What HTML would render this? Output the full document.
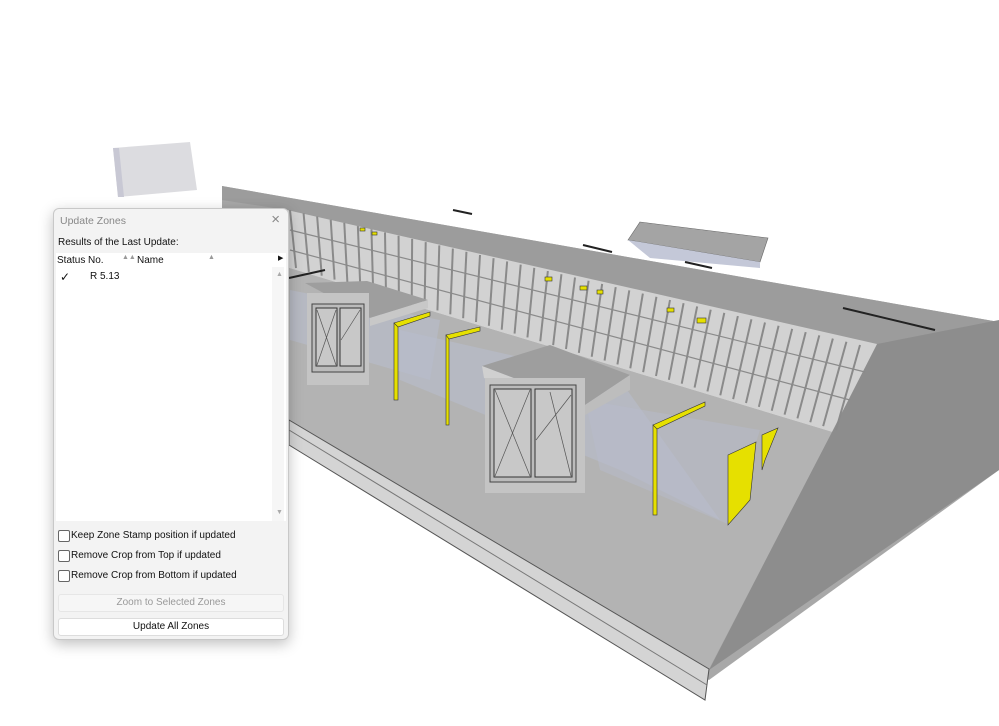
<!DOCTYPE html>
<html><head><meta charset="utf-8"><style>
body{margin:0;width:999px;height:726px;background:#fff;overflow:hidden;position:relative;font-family:"Liberation Sans",sans-serif}
#dlg{position:absolute;left:53px;top:208px;width:234px;height:430px;background:#f3f3f3;border:1px solid #c8c8c8;border-radius:6px;box-shadow:0 4px 14px rgba(0,0,0,.25);font-size:10px;color:#111}
.t{position:absolute}
.cb{position:absolute;left:4px;width:10px;height:10px;border:1px solid #666;border-radius:2px;background:#fff}
.btn{position:absolute;left:4px;width:224px;height:16px;border:1px solid #ddd;border-radius:3px;text-align:center;line-height:16px}
</style></head><body>
<svg id="sv" width="999" height="726" style="position:absolute;left:0;top:0">
<polygon points="113,148 190,142 197,190 118,197" fill="#dcdce0"/>
<polygon points="113,148 118,197 124,197 119,148" fill="#c8c8d4"/>
<polygon points="222,186 999,322 999,470 709,680 289,440 222,215" fill="#a8a8a8"/>
<polygon points="222,186 999,322 877,345 287,210 222,200" fill="#9c9c9c"/>
<polygon points="640,222 768,238 760,262 628,240" fill="#a4a4a4" stroke="#666" stroke-width=".6"/>
<polygon points="628,240 760,262 760,268 650,258" fill="#c4c8d8"/>
<polygon points="877,344 999,320 999,470 709,670" fill="#8d8d8d"/>
<polygon points="287,210 877,344 832,432 289,268" fill="#d2d2d2"/>
<g id="raf" stroke="#8a8a8a" stroke-width="2"></g>
<polygon points="289,268 832,432 709,669 289,420" fill="#b3b3b3"/>
<polygon points="289,420 709,669 705,700 289,445" fill="#d4d4d4" stroke="#555" stroke-width="1"/>
<line x1="289" y1="430" x2="707" y2="685" stroke="#777"/>
<polygon points="290,290 440,320 430,380 290,340" fill="#b8bccc" opacity=".6"/>
<polygon points="400,330 620,380 720,520 620,470 400,380" fill="#b8bccc" opacity=".6"/>
<polygon points="585,400 760,430 730,525 600,470" fill="#b8bccc" opacity=".5"/>
<!-- dormer1 -->
<polygon points="305,283 367,281 428,300 370,318" fill="#9e9e9e"/>
<polygon points="370,318 428,300 428,308 370,326" fill="#c8c8c8"/>
<rect x="307" y="293" width="62" height="92" fill="#c4c4c4"/>
<rect x="312" y="304" width="52" height="68" fill="#bbb" stroke="#444"/>
<rect x="316" y="308" width="21" height="58" fill="#c8c8c8" stroke="#333"/>
<rect x="340" y="308" width="21" height="58" fill="#c8c8c8" stroke="#333"/>
<!-- dormer2 -->
<polygon points="482,366 550,345 630,375 585,405" fill="#9e9e9e"/>
<polygon points="585,405 630,375 630,390 585,415" fill="#bdbdbd"/>
<polygon points="482,366 585,405 585,415 484,378" fill="#d0d0d0"/>
<rect x="485" y="378" width="100" height="115" fill="#c4c4c4"/>
<rect x="490" y="385" width="86" height="97" fill="#bbb" stroke="#444"/>
<rect x="494" y="389" width="37" height="88" fill="#c8c8c8" stroke="#333"/>
<rect x="535" y="389" width="37" height="88" fill="#c8c8c8" stroke="#333"/>
<g stroke="#555" stroke-width=".7"><line x1="317" y1="310" x2="336" y2="365"/><line x1="336" y1="310" x2="317" y2="365"/><line x1="341" y1="340" x2="360" y2="310"/><line x1="495" y1="390" x2="530" y2="476"/><line x1="530" y1="390" x2="495" y2="476"/><line x1="536" y1="440" x2="571" y2="395"/><line x1="550" y1="392" x2="571" y2="476"/></g>
<!-- yellow -->
<g fill="#e6e000" stroke="#333" stroke-width=".6">
<rect x="394" y="323" width="4" height="77"/><polygon points="394,323 430,312 430,316 398,327"/>
<rect x="446" y="335" width="3" height="90"/><polygon points="446,335 480,327 480,331 449,339"/>
<rect x="653" y="425" width="4" height="90"/><polygon points="653,425 705,402 705,406 657,429"/>
<polygon points="728,455 756,442 750,500 728,525"/><polygon points="762,435 778,428 765,460 762,470"/>
<rect x="545" y="277" width="7" height="4"/><rect x="580" y="286" width="7" height="4"/><rect x="597" y="290" width="6" height="4"/><rect x="667" y="308" width="7" height="4"/><rect x="697" y="318" width="9" height="5"/><rect x="360" y="228" width="5" height="3"/><rect x="372" y="232" width="5" height="3"/>
</g>
<g stroke="#222" stroke-width="2"><line x1="453" y1="210" x2="472" y2="214"/><line x1="583" y1="245" x2="612" y2="252"/><line x1="685" y1="262" x2="712" y2="268"/><line x1="843" y1="308" x2="935" y2="330"/><line x1="289" y1="278" x2="325" y2="270"/></g>
</svg>
<div id="dlg">
<div class="t" style="left:6px;top:6px;color:#888;font-size:10.5px">Update Zones</div>
<div class="t" style="right:8px;top:2px;color:#888;font-size:15px">×</div>
<div class="t" style="left:4px;top:28px">Results of the Last Update:</div>
<div style="position:absolute;left:2px;top:44px;width:230px;height:268px;background:#fff">
<div class="t" style="left:1px;top:2px">Status</div>
<div class="t" style="left:32px;top:2px">No.</div>
<div class="t" style="left:66px;top:1px;color:#999;font-size:7px">▲▲</div>
<div class="t" style="left:81px;top:2px">Name</div>
<div class="t" style="left:152px;top:1px;color:#999;font-size:7px">▲</div>
<div class="t" style="left:222px;top:1px;font-size:7px">▶</div>
<div class="t" style="left:216px;top:14px;width:12px;height:254px;background:#f6f6f6"></div>
<div class="t" style="left:220px;top:18px;color:#aaa;font-size:7px">▲</div>
<div class="t" style="left:220px;top:256px;color:#aaa;font-size:7px">▼</div>
<div class="t" style="left:4px;top:17px;font-size:12px">✓</div>
<div class="t" style="left:34px;top:18px">R 5.13</div>
</div>
<div class="cb" style="top:321px"></div><div class="t" style="left:17px;top:321px">Keep Zone Stamp position if updated</div>
<div class="cb" style="top:341px"></div><div class="t" style="left:17px;top:341px">Remove Crop from Top if updated</div>
<div class="cb" style="top:361px"></div><div class="t" style="left:17px;top:361px">Remove Crop from Bottom if updated</div>
<div class="btn" style="top:385px;color:#999;background:#f6f6f6;border-color:#e6e6e6">Zoom to Selected Zones</div>
<div class="btn" style="top:409px;background:#fff">Update All Zones</div>
</div>
<script>
var g=document.getElementById('raf'),s='';
for(var i=0;i<=42;i++){var t=i/42;var x1=290+570*t,y1=210+135*t,x2=296+540*t,y2=268+162*t;s+='<line x1="'+x1+'" y1="'+y1+'" x2="'+x2+'" y2="'+y2+'"/>';}
s+='<line x1="290" y1="230" x2="865" y2="372" stroke-width="1.2"/><line x1="290" y1="250" x2="850" y2="400" stroke-width="1.2"/>';
g.innerHTML=s;
</script>
</body></html>
